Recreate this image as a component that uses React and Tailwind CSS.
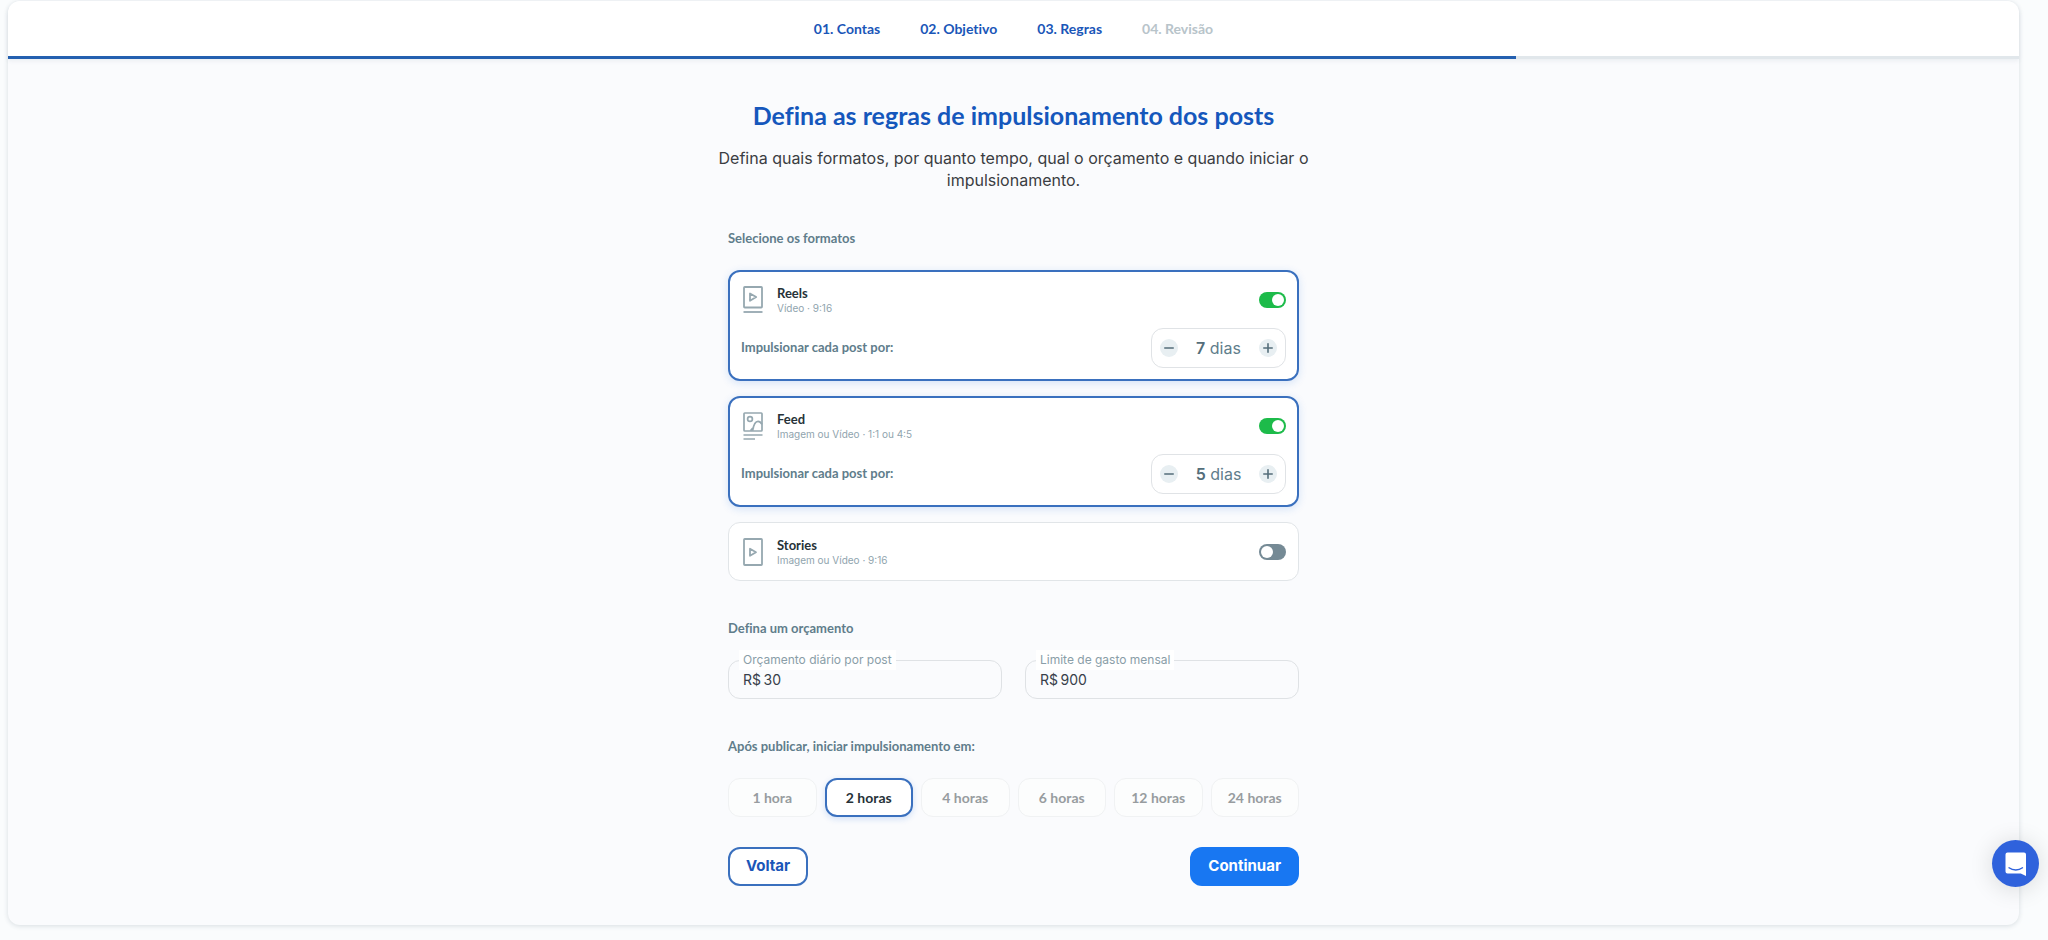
import { useState } from "react";
import { clsx } from "clsx";

const steps = ["01. Contas", "02. Objetivo", "03. Regras", "04. Revisão"];
const CURRENT_STEP = 3;

const delays = ["1 hora", "2 horas", "4 horas", "6 horas", "12 horas", "24 horas"];

const ReelsIcon = () => (
  <svg width="20" height="28" viewBox="0 0 20 28" fill="none" stroke="#96a8b0" strokeWidth="1.8" strokeLinejoin="round">
    <rect x="1" y="1" width="18" height="20.5" rx="0.8" />
    <path d="M7 7.4v7.4l6.2-3.7z" />
    <path d="M0.5 26h19" />
  </svg>
);

const FeedIcon = () => (
  <svg width="20" height="28" viewBox="0 0 20 28" fill="none" stroke="#96a8b0" strokeWidth="1.7" strokeLinejoin="round">
    <rect x="1" y="1" width="18" height="18" rx="0.8" />
    <circle cx="7" cy="7" r="2.4" />
    <path d="M7.5 18.8C8.4 17.4 9.4 16 11 15.2M9.6 18.8C10.6 12.6 12.800 9.400 15 9.400c1.800 0 3 1.200 4 3" />
    <path d="M0.500 23h19M0.500 27h11.500" />
  </svg>
);

const StoriesIcon = () => (
  <svg width="20" height="28" viewBox="0 0 20 28" fill="none" stroke="#96a8b0" strokeWidth="1.8" strokeLinejoin="round">
    <rect x="1" y="1" width="18" height="26" rx="0.8" />
    <path d="M7 10.800v7l6-3.500z" />
  </svg>
);

const initialFormats = [
  { id: "reels", name: "Reels", hint: "Vídeo · 9:16", Icon: ReelsIcon, days: 7, active: true },
  { id: "feed", name: "Feed", hint: "Imagem ou Vídeo · 1:1 ou 4:5", Icon: FeedIcon, days: 5, active: true },
  { id: "stories", name: "Stories", hint: "Imagem ou Vídeo · 9:16", Icon: StoriesIcon, days: 5, active: false }
];

const Toggle = ({ id, checked, onChange }) => (
  <input
    id={id}
    type="checkbox"
    role="switch"
    checked={checked}
    onChange={onChange}
    className="h-4 w-[27px] cursor-pointer appearance-none rounded-full bg-[#758a95] p-[2px] before:block before:size-3 before:rounded-full before:bg-white checked:bg-[#1dbb4a] checked:before:ml-auto"
  />
);

const StepButton = ({ label, path, onClick }) => (
  <button
    type="button"
    aria-label={label}
    onClick={onClick}
    className="flex size-[18px] cursor-pointer items-center justify-center rounded-full bg-[#e8eff2]"
  >
    <svg width="10" height="10" viewBox="0 0 10 10" stroke="#546e7a" strokeWidth="1.6" strokeLinecap="round">
      <path d={path} />
    </svg>
  </button>
);

const DaysStepper = ({ days, onStep }) => (
  <div className="flex h-10 w-[135px] items-center justify-between rounded-xl border border-[#e0e3e6] bg-white px-2">
    <StepButton label="Diminuir dias" path="M0.800 5h8.400" onClick={() => onStep(-1)} />
    <span className="text-base text-[#607d8b]">
      <span className="font-semibold text-[#546e7a]">{days}</span> dias
    </span>
    <StepButton label="Aumentar dias" path="M0.800 5h8.400M5 0.800v8.400" onClick={() => onStep(1)} />
  </div>
);

const FormatCard = ({ format, onToggle, onStep }) => {
  const { id, name, hint, Icon, days, active } = format;
  return (
    <div
      className={clsx(
        "rounded-xl bg-white",
        active
          ? "border-2 border-[#3a70be] p-[11px] shadow-[0_2px_8px_rgba(21,101,216,0.16)]"
          : "border border-[#e1e5e8] p-3"
      )}
    >
      <div className="flex h-[33px] items-center justify-between">
        <label htmlFor={id} className="flex items-center gap-3.5 pl-0.5">
          <Icon />
          <span className="flex flex-col">
            <span className="font-[Lato] text-[13px] leading-4 font-bold text-[#263238]">{name}</span>
            <span className="text-[10px] leading-[14px] text-[#90a4ae]">{hint}</span>
          </span>
        </label>
        <Toggle id={id} checked={active} onChange={onToggle} />
      </div>
      {active && (
        <div className="mt-3 flex items-center justify-between">
          <span className="font-[Lato] text-[13px] font-bold text-[#607d8b]">Impulsionar cada post por:</span>
          <DaysStepper days={days} onStep={onStep} />
        </div>
      )}
    </div>
  );
};

const MoneyField = ({ id, label, value, onChange }) => (
  <div className="relative">
    <label htmlFor={id} className="absolute -top-2.5 left-[11px] bg-white px-1 text-xs leading-5 text-[#8a9ea8]">
      {label}
    </label>
    <input
      id={id}
      type="text"
      value={value}
      onChange={(e) => onChange(e.target.value)}
      className="block h-[39px] w-full rounded-xl border border-[#dfe2e5] bg-transparent px-3.5 text-sm text-[#37404a] outline-none"
    />
  </div>
);

const SectionTitle = ({ children }) => (
  <h2 className="mb-[22px] font-[Lato] text-[13px] leading-5 font-bold text-[#607d8b]">{children}</h2>
);

const App = () => {
  const [formats, setFormats] = useState(initialFormats);
  const [daily, setDaily] = useState("R$\u200930");
  const [monthly, setMonthly] = useState("R$\u2009900");
  const [delay, setDelay] = useState("2 horas");

  const updateFormat = (id, change) =>
    setFormats((list) => list.map((f) => (f.id === id ? { ...f, ...change(f) } : f)));

  return (
    <div className="min-h-screen bg-[#fafcfd] pt-px pr-[29px] pb-3.5 pl-2 font-[Inter,sans-serif] [font-variant-ligatures:no-common-ligatures]">
      <div className="rounded-xl bg-[#fafbfd] shadow-[0_1px_5px_rgba(40,60,80,0.16)]">
        <header className="rounded-t-xl bg-white shadow-[0_2px_4px_rgba(60,90,120,0.08)]">
          <nav className="flex h-[55px] items-center justify-center gap-10 font-[Lato] text-sm font-bold">
            {steps.map((step, index) => (
              <a key={step} href="#" className={index < CURRENT_STEP ? "text-[#1a56b8]" : "text-[#b8c4ca]"}>
                {step}
              </a>
            ))}
          </nav>
          <div className="h-[3px] bg-[#e1e7eb]">
            <div className="h-full bg-[#2460b0]" style={{ width: `${(CURRENT_STEP / steps.length) * 100}%` }} />
          </div>
        </header>

        <main className="mx-auto w-full max-w-[571px] pt-10 pb-[39px]">
          <h1 className="text-center font-[Lato] text-[25px] leading-8 font-bold whitespace-nowrap text-[#1557bc]">
            Defina as regras de impulsionamento dos posts
          </h1>
          <p className="-mx-4 mt-4 text-center text-base leading-[22px] text-[#3a3d42]">
            Defina quais formatos, por quanto tempo, qual o orçamento e quando iniciar o impulsionamento.
          </p>

          <section className="mt-[37px]">
            <SectionTitle>Selecione os formatos</SectionTitle>
            <div className="flex flex-col gap-[15px]">
              {formats.map((format) => (
                <FormatCard
                  key={format.id}
                  format={format}
                  onToggle={() => updateFormat(format.id, (f) => ({ active: !f.active }))}
                  onStep={(n) => updateFormat(format.id, (f) => ({ days: Math.max(1, f.days + n) }))}
                />
              ))}
            </div>
          </section>

          <section className="mt-[37px]">
            <SectionTitle>Defina um orçamento</SectionTitle>
            <div className="grid grid-cols-2 gap-[23px]">
              <MoneyField id="daily" label="Orçamento diário por post" value={daily} onChange={setDaily} />
              <MoneyField id="monthly" label="Limite de gasto mensal" value={monthly} onChange={setMonthly} />
            </div>
          </section>

          <section className="mt-[37px]">
            <SectionTitle>Após publicar, iniciar impulsionamento em:</SectionTitle>
            <div className="grid grid-cols-6 gap-2">
              {delays.map((item) => (
                <label
                  key={item}
                  className={clsx(
                    "flex h-[39px] cursor-pointer items-center justify-center rounded-xl font-[Lato] text-sm font-bold",
                    delay === item
                      ? "border-2 border-[#3a70be] bg-white text-[#263238] shadow-[0_2px_6px_rgba(21,101,216,0.18)]"
                      : "border border-[#f0f2f3] bg-[#fcfdfd] text-[#979c9f]"
                  )}
                >
                  <input
                    type="radio"
                    name="delay"
                    value={item}
                    checked={delay === item}
                    onChange={() => setDelay(item)}
                    className="sr-only"
                  />
                  {item}
                </label>
              ))}
            </div>
          </section>

          <div className="mt-[30px] flex justify-between text-[15px] font-bold">
            <button
              type="button"
              className="h-[39px] cursor-pointer rounded-xl border-2 border-[#3a70be] bg-white px-4 text-[#1a56b8]"
            >
              Voltar
            </button>
            <button type="button" className="h-[39px] cursor-pointer rounded-xl bg-[#1877f2] px-[18px] text-white">
              Continuar
            </button>
          </div>
        </main>
      </div>

      <button
        type="button"
        aria-label="Abrir chat"
        className="fixed right-[9px] bottom-[53px] flex size-[47px] cursor-pointer items-center justify-center rounded-full bg-[#2f62dc] shadow-[0_2px_24px_rgba(0,0,0,0.14)]"
      >
        <svg width="22" height="24" viewBox="0 0 22 24">
          <path d="M2.500 0.500h16.500a2 2 0 0 1 2 2V24l-5.200-2.500H2.500a2 2 0 0 1-2-2v-17a2 2 0 0 1 2-2z" fill="#fff" />
          <path d="M4 15.800c4 3 9.500 3 13.500 0" fill="none" stroke="#2f62dc" strokeWidth="1.400" strokeLinecap="round" />
        </svg>
      </button>
    </div>
  );
};

export default App;
